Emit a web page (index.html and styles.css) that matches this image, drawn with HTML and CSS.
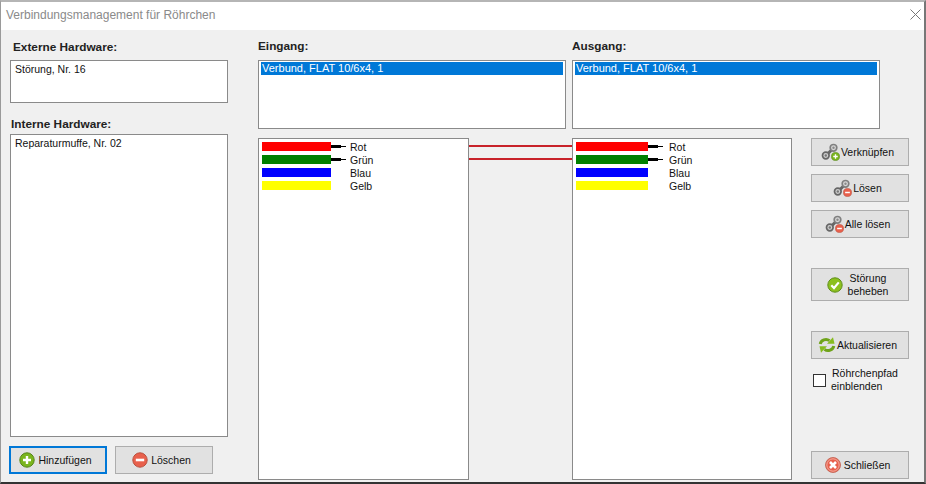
FILE: index.html
```html
<!DOCTYPE html>
<html lang="de">
<head>
  <meta charset="UTF-8" />
  <title>Verbindungsmanagement für Röhrchen</title>
  <link rel="stylesheet" href="styles.css">
</head>
<body>
  <svg class="defs" width="0" height="0">
    <defs>
      <symbol id="ic-links" viewBox="0 0 18 18">
        <path d="M6 11.500 11 6.500" stroke="#666" stroke-width="3"/>
        <circle cx="4.800" cy="12.500" r="3.300" fill="#cfcfcf" stroke="#666" stroke-width="1.700"/>
        <circle cx="12.500" cy="4.800" r="3.300" fill="#d8d8d8" stroke="#808080" stroke-width="1.700"/>
        <circle cx="4.800" cy="12.500" r="1.200" fill="#777"/>
        <circle cx="12.500" cy="4.800" r="1.200" fill="#8a8a8a"/>
      </symbol>
      <symbol id="ic-add" viewBox="0 0 16 16">
        <circle cx="8" cy="8" r="7.2" fill="#7ab51d" stroke="#55851a"/>
        <path d="M8 4v8M4 8h8" stroke="#fff" stroke-width="2.400"/>
      </symbol>
      <symbol id="ic-remove" viewBox="0 0 16 16">
        <circle cx="8" cy="8" r="7.2" fill="#e8604c" stroke="#b9503f"/>
        <path d="M3.800 8h8.400" stroke="#fff" stroke-width="2.600"/>
      </symbol>
      <symbol id="ic-check" viewBox="0 0 16 16">
        <circle cx="8" cy="8" r="7.2" fill="#8cc01e" stroke="#5f8f1a"/>
        <path d="M4.300 8.200 7 11l4.800-5.600" fill="none" stroke="#fff" stroke-width="2.200"/>
      </symbol>
      <symbol id="ic-refresh" viewBox="0 0 18 18">
        <path d="M2.200 8C3 4 8 2 11.500 4.600" fill="none" stroke="#6fa31a" stroke-width="3"/>
        <path d="M9 7.800H16.500L15 1.200Z" fill="#86bb1f"/>
        <path d="M15.800 10C15 14 10 16 6.500 13.400" fill="none" stroke="#6fa31a" stroke-width="3"/>
        <path d="M9 10.200H1.500L3 16.800Z" fill="#86bb1f"/>
      </symbol>
      <symbol id="ic-close" viewBox="0 0 16 16">
        <circle cx="8" cy="8" r="7.500" fill="#e8604c" stroke="#c0604f" stroke-width=".8"/>
        <circle cx="8" cy="8" r="6.200" fill="none" stroke="#f6c1b6" stroke-width=".8"/>
        <path d="M5 5l6 6M11 5l-6 6" stroke="#fff" stroke-width="2.600"/>
      </symbol>
    </defs>
  </svg>

  <div class="window">
    <div class="titlebar">
      <span class="title">Verbindungsmanagement für Röhrchen</span>
      <svg class="close-x" width="11" height="11" viewBox="0 0 11 11"><path d="M.5.5l10 10M10.500.5l-10 10" stroke="#777" fill="none"/></svg>
    </div>

    <div class="client">
      <div class="col-left">
        <label class="head head-ext">Externe Hardware:</label>
        <div class="box box-ext">Störung, Nr. 16</div>
        <label class="head head-int">Interne Hardware:</label>
        <div class="box box-int">Reparaturmuffe, Nr. 02</div>
        <div class="left-actions">
          <button class="btn btn-focus" type="button"><svg width="16" height="16"><use href="#ic-add"/></svg>Hinzufügen</button>
          <button class="btn" type="button"><svg width="16" height="16"><use href="#ic-remove"/></svg>Löschen</button>
        </div>
      </div>

      <div class="col-main">
        <div class="pickers">
          <div class="picker">
            <label class="head">Eingang:</label>
            <div class="box box-sel"><div class="sel">Verbund, FLAT 10/6x4, 1</div></div>
          </div>
          <div class="picker">
            <label class="head">Ausgang:</label>
            <div class="box box-sel"><div class="sel">Verbund, FLAT 10/6x4, 1</div></div>
          </div>
        </div>

        <div class="lower">
          <div class="box panel panel-in">
            <div class="tube"><i class="swatch red"></i><i class="stub"></i><span>Rot</span></div>
            <div class="tube"><i class="swatch green"></i><i class="stub"></i><span>Grün</span></div>
            <div class="tube"><i class="swatch blue"></i><i class="stub none"></i><span>Blau</span></div>
            <div class="tube"><i class="swatch yellow"></i><i class="stub none"></i><span>Gelb</span></div>
          </div>
          <div class="wires">
            <div class="wire"></div>
            <div class="wire"></div>
          </div>
          <div class="box panel panel-out">
            <div class="tube"><i class="swatch red"></i><i class="stub"></i><span>Rot</span></div>
            <div class="tube"><i class="swatch green"></i><i class="stub"></i><span>Grün</span></div>
            <div class="tube"><i class="swatch blue"></i><i class="stub none"></i><span>Blau</span></div>
            <div class="tube"><i class="swatch yellow"></i><i class="stub none"></i><span>Gelb</span></div>
          </div>

          <div class="col-right">
            <button class="btn btn-side" type="button"><span class="linkicon"><svg width="18" height="18"><use href="#ic-links"/></svg><svg class="badge" width="9" height="9"><use href="#ic-add"/></svg></span>Verknüpfen</button>
            <button class="btn btn-side" type="button"><span class="linkicon"><svg width="18" height="18"><use href="#ic-links"/></svg><svg class="badge" width="9" height="9"><use href="#ic-remove"/></svg></span>Lösen</button>
            <button class="btn btn-side" type="button"><span class="linkicon"><svg width="18" height="18"><use href="#ic-links"/></svg><svg class="badge" width="9" height="9"><use href="#ic-remove"/></svg></span>Alle lösen</button>
            <button class="btn btn-side btn-tall" type="button"><svg width="16" height="16"><use href="#ic-check"/></svg><span class="two-line">Störung<br>beheben</span></button>
            <button class="btn btn-side btn-refresh" type="button"><svg width="18" height="18"><use href="#ic-refresh"/></svg>Aktualisieren</button>
            <label class="check"><span class="checkbox"></span><span class="check-text"><span class="indent">Röhrchenpfad</span><br>einblenden</span></label>
            <button class="btn btn-close" type="button"><svg width="16" height="16"><use href="#ic-close"/></svg>Schließen</button>
          </div>
        </div>
      </div>
    </div>
  </div>
</body>
</html>
```

FILE: styles.css
```css
html, body { margin: 0; padding: 0; }
body { font-family: "Liberation Sans", Arial, sans-serif; font-size: 10.5px; color: #111; background: #f0f0f0; overflow: hidden; }
.defs { position: absolute; }

.window {
  width: 926px;
  height: 484px;
  box-sizing: border-box;
  border: 1px solid #9a9a9a;
  border-top: 2px solid #b5b5b5;
  border-right: 2px solid #777;
  border-bottom: 2px solid #333;
  background: #f0f0f0;
  display: flex;
  flex-direction: column;
}

.titlebar {
  height: 28px;
  box-sizing: border-box;
  background: #fff;
  display: flex;
  align-items: center;
  justify-content: space-between;
  padding: 0 3px 3px 5px;
  flex: none;
}
.title { color: #8a8a8a; font-size: 12px; }

.client {
  flex: 1;
  display: flex;
  min-height: 0;
}

.head { display: block; font-weight: bold; font-size: 11.8px; color: #222; }
.box {
  background: #fff;
  border: 1px solid #8a8a8a;
  box-sizing: border-box;
  padding: 2px 4px;
  line-height: 13px;
}

/* links */
.col-left { width: 218px; margin-left: 9px; flex: none; display: flex; flex-direction: column; }
.head-ext { margin: 10px 0 0 3px; height: 20px; line-height: 14px; }
.box-ext { height: 43px; }
.head-int { margin: 14px 0 0 1px; height: 17px; line-height: 14px; }
.box-int { height: 303px; }
.left-actions { display: flex; gap: 8px; margin: 9px 0 0 -1px; }

/* mitte */
.col-main { width: 651px; margin-left: 30px; flex: none; display: flex; flex-direction: column; }
.pickers { display: flex; gap: 6px; margin-top: 9px; }
.picker { width: 308px; }
.picker .head { height: 21px; line-height: 14px; }
.box-sel { height: 69px; padding: 1px 2px; }
.sel { background: #0078d7; color: #fff; height: 13px; line-height: 13px; padding-left: 1px; font-size: 11px; }

.lower { display: flex; margin-top: 9px; height: 342px; }
.panel { padding: 1px 3px; }
.panel-in { width: 211px; flex: none; }
.panel-out { width: 220px; flex: none; }
.tube { display: flex; align-items: center; height: 13px; }
.tube span { margin: 1px 0 0 4px; }
.swatch { width: 69px; height: 9px; flex: none; }
.panel-out .swatch { width: 72px; }
.panel-out .tube span { margin-left: 6px; }
.red { background: #f00; }
.green { background: #008000; }
.blue { background: #00f; }
.yellow { background: #ff0; }
.stub { position: relative; width: 15px; height: 1px; background: #000; flex: none; }
.stub::before { content: ""; position: absolute; left: 0; top: -1px; width: 10px; height: 3px; background: #000; }
.stub.none, .stub.none::before { background: transparent; }

.wires { width: 103px; flex: none; padding-top: 7px; }
.wire { height: 2px; background: #c8222a; margin-bottom: 11px; }

/* rechts */
.col-right { width: 98px; margin-left: 19px; flex: none; display: flex; flex-direction: column; }
.btn {
  font: inherit;
  color: #111;
  width: 98px;
  height: 28px;
  background: #e1e1e1;
  border: 1px solid #adadad;
  padding: 0 5px 0 0;
  display: flex;
  align-items: center;
  justify-content: center;
  gap: 3px;
  flex: none;
}
.btn-focus { border: 2px solid #0078d7; }
.btn-side { margin-bottom: 8px; }
.btn-tall { height: 33px; margin-top: 22px; gap: 5px; }
.btn-refresh { margin-top: 22px; gap: 1px; }
.btn-close { margin-top: auto; margin-bottom: 1px; }
.two-line { text-align: center; line-height: 13px; }

.linkicon { position: relative; width: 18px; height: 18px; flex: none; margin-right: -1px; }
.linkicon svg { display: block; }
.linkicon .badge { position: absolute; right: -1px; bottom: 0; }

.check { display: flex; align-items: center; gap: 5px; line-height: 13px; margin-left: 2px; }
.checkbox { width: 11px; height: 11px; background: #fff; border: 1px solid #333; flex: none; }
.indent { margin-left: 1px; }
```
